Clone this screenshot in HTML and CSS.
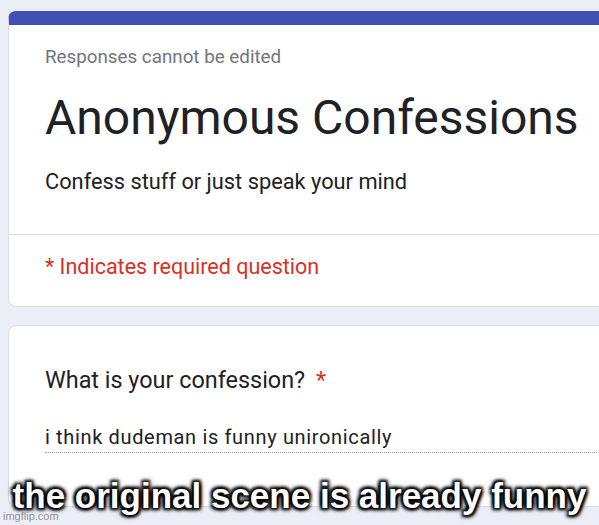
FILE: index.html
```html
<!DOCTYPE html>
<html lang="en">
<head>
  <meta charset="UTF-8" />
  <meta name="viewport" content="width=device-width, initial-scale=1" />
  <title>Anonymous Confessions</title>
  <link rel="stylesheet" href="styles.css">
</head>
<body>
  <div class="page">
    <!-- form header card -->
    <section class="card header-card">
      <div class="header-top">
        <div class="notice">Responses cannot be edited</div>
        <h1 class="form-title">Anonymous Confessions</h1>
        <div class="form-desc">Confess stuff or just speak your mind</div>
      </div>
      <div class="required-note">* Indicates required question</div>
    </section>

    <!-- question card -->
    <section class="card question-card">
      <div class="question">What is your confession? <span class="star">*</span></div>
      <div class="answer">i think dudeman is funny unironically</div>
    </section>
  </div>

  <div class="caption">the original scene is already funny</div>
  <div class="watermark">imgflip.com</div>
</body>
</html>
```

FILE: styles.css
```css
body {
  margin: 0;
  height: 525px;
  overflow: hidden;
  background-color: #ebedf7;
  font-family: Roboto, "Noto Sans", Arial, sans-serif;
  color: #202124;
  position: relative;
}

.page {
  padding: 11px 0 0 8px;
  width: 640px;
  display: flex;
  flex-direction: column;
  gap: 18px;
}

.card {
  background: #fff;
  border: 1px solid #dadce0;
  border-radius: 8px;
}

/* Header card */
.header-card {
  border-top: 14px solid #3f51b5;
  height: 281px;
  display: flex;
  flex-direction: column;
}

.header-top {
  box-sizing: border-box;
  padding: 20px 36px 0;
  height: 210px;
  border-bottom: 1px solid #dadce0;
}

.notice {
  font-size: 18.8px;
  color: #70757a;
  line-height: 24px;
}

.form-title {
  margin: 22px 0 0;
  font-size: 48px;
  font-weight: 400;
  line-height: 54px;
}

.form-desc {
  margin-top: 23px;
  font-size: 21.8px;
  line-height: 28px;
}

.required-note {
  padding: 18px 36px 0;
  font-size: 21.5px;
  line-height: 28px;
  color: #d93025;
}

/* Question card */
.question-card {
  height: 182px;
  padding: 39px 0 0 36px;
  box-sizing: border-box;
}

.question {
  font-size: 23.4px;
  line-height: 30px;
}

.star {
  color: #d93025;
  margin-left: 5px;
}

.answer {
  margin-top: 29px;
  width: 552px;
  font-size: 20px;
  letter-spacing: 0.65px;
  line-height: 26px;
  padding-bottom: 2px;
  border-bottom: 1px dotted #9aa0a6;
}

/* Meme overlay */
.caption {
  position: absolute;
  left: 0;
  right: 0;
  bottom: 9px;
  text-align: center;
  white-space: nowrap;
  font-family: "Liberation Sans", Arial, sans-serif;
  font-weight: bold;
  font-size: 35px;
  line-height: 40px;
  color: #fff;
  text-shadow:
    2px 2px 3px #000,
    -2px 2px 3px #000,
    2px -2px 3px #000,
    -2px -2px 3px #000,
    0 0 6px #000;
}

.watermark {
  position: absolute;
  left: 3px;
  bottom: 3px;
  font-family: "Liberation Sans", Arial, sans-serif;
  font-size: 11px;
  color: rgba(120, 120, 120, 0.8);
}
```
